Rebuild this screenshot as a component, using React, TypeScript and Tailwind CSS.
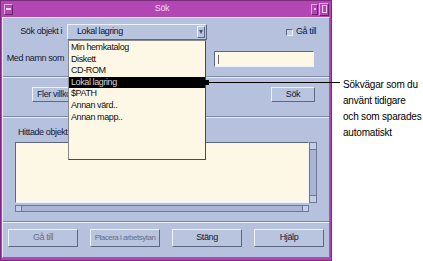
import React from "react";

const ui = { fontFamily: '"Liberation Sans", Arial, sans-serif' };

function Bevel({
  className = "",
  children,
  dim = false,
}: {
  className?: string;
  children?: React.ReactNode;
  dim?: boolean;
}) {
  return (
    <div
      className={`flex items-center justify-center whitespace-nowrap border border-t-[#eef2fa] border-l-[#eef2fa] border-b-[#5d6784] border-r-[#5d6784] bg-[#b9c4df] text-[9px] tracking-[-0.4px] ${
        dim ? "text-[#67708c]" : "text-[#14183a]"
      } ${className}`}
    >
      {children}
    </div>
  );
}

function Separator({ className = "" }: { className?: string }) {
  return (
    <div className={`flex flex-col ${className}`}>
      <div className="h-px bg-[#7c87a5]" />
      <div className="h-px bg-[#e8eef8]" />
    </div>
  );
}

const items = [
  { label: "Min hemkatalog" },
  { label: "Diskett" },
  { label: "CD-ROM" },
  { label: "Lokal lagring", active: true },
  { label: "$PATH" },
  { label: "Annan värd.." },
  { label: "Annan mapp.." },
];

export default function App() {
  return (
    <div className="relative flex w-[423px] h-[261px] bg-white overflow-hidden" style={ui}>
      {/* window frame */}
      <div className="flex flex-col w-[332px] h-[261px] bg-[#b247b4] border border-[#7b2a7d] px-[1px] pb-[2px]">
        <div className="flex items-center h-[16px] shrink-0">
          <div className="flex items-center justify-center w-[9px] h-[11px] ml-[2px] border border-[#e7a4e8] border-r-[#6e1f70] border-b-[#6e1f70]">
            <div className="w-[5px] h-[2px] bg-[#f4d8f5]" />
          </div>
          <div className="flex-1 text-center text-[9px] text-[#f3d9f3] tracking-[-0.3px]">Sök</div>
          <div className="flex items-center justify-center w-[7px] h-[11px] border border-[#e7a4e8] border-r-[#6e1f70] border-b-[#6e1f70]">
            <div className="w-[2px] h-[2px] bg-[#f4d8f5]" />
          </div>
          <div className="flex items-center justify-center w-[10px] h-[13px] ml-[1px] mr-[1px] border border-[#e7a4e8] border-r-[#6e1f70] border-b-[#6e1f70]">
            <div className="w-[5px] h-[8px] border border-[#f0c8f0]" />
          </div>
        </div>

        {/* dialog body */}
        <div className="flex flex-col flex-1 bg-[#b6c2dd] border border-[#e3e9f5] border-r-[#6a7492] border-b-[#6a7492] text-[#14183a]">
          {/* row 1 */}
          <div className="flex items-center h-[16px] mt-[6px]">
            <div className="w-[59px] text-right text-[9px] tracking-[-0.4px]">Sök objekt i</div>
            <Bevel className="ml-[5px] w-[140px] h-[16px] !justify-start pl-[9px] pr-[1px] !text-[#101438]">
              <span className="flex-1">Lokal lagring</span>
              <div className="flex items-center justify-center w-[8px] h-[12px] border border-t-[#eef2fa] border-l-[#eef2fa] border-b-[#5d6784] border-r-[#5d6784]">
                <div className="w-0 h-0 border-l-[2px] border-r-[2px] border-t-[4px] border-l-transparent border-r-transparent border-t-[#4a5270]" />
              </div>
            </Bevel>
            <div className="ml-[79px] flex items-center gap-[3px] text-[9px] tracking-[-0.4px]">
              <div className="w-[7px] h-[7px] border border-[#5d6784] border-r-[#eef2fa] border-b-[#eef2fa] bg-[#c7d0e6]" />
              Gå till
            </div>
          </div>

          {/* row 2 */}
          <div className="flex items-center h-[16px] mt-[11px]">
            <div className="w-[61px] text-right text-[9px] tracking-[-0.4px]">Med namn som</div>
            <div className="ml-[150px] w-[100px] h-[16px] flex items-center bg-[#fdf8e6] border border-[#5d6784] border-r-[#eef2fa] border-b-[#eef2fa] pl-[3px]">
              <div className="w-px h-[9px] bg-[#6a6a6a]" />
            </div>
          </div>

          <Separator className="mt-[9px]" />

          {/* row 3 */}
          <div className="flex items-center h-[15px] mt-[9px]">
            <Bevel className="ml-[29px] w-[80px] h-[15px] !justify-start pl-[4px]">Fler villkor...</Bevel>
            <Bevel className="ml-[159px] w-[44px] h-[15px]">Sök</Bevel>
          </div>

          <Separator className="mt-[14px]" />

          <div className="mt-[9px] pl-[15px] text-[9px] tracking-[-0.4px] leading-[11px]">Hittade objekt:</div>

          {/* result list */}
          <div className="flex mt-[4px] ml-[12px]">
            <div className="w-[294px] h-[61px] bg-[#fdf8e6] border border-[#5d6784] border-r-[#eef2fa] border-b-[#eef2fa]" />
            <div className="flex flex-col w-[8px] h-[61px] bg-[#a9b5d2] border border-[#6e7896]">
              <div className="h-[7px] border-b border-[#6e7896] bg-[#c3cde5]" />
              <div className="flex-1" />
              <div className="h-[7px] border-t border-[#6e7896] bg-[#c3cde5]" />
            </div>
          </div>
          <div className="flex mt-[2px] ml-[12px] w-[294px] h-[7px] bg-[#a9b5d2] border border-[#6e7896]">
            <div className="w-[6px] border-r border-[#6e7896] bg-[#c3cde5]" />
            <div className="flex-1" />
            <div className="w-[6px] border-l border-[#6e7896] bg-[#c3cde5]" />
          </div>

          <Separator className="mt-[9px]" />

          {/* bottom buttons */}
          <div className="flex items-center gap-[12px] mt-[6px] ml-[5px]">
            <Bevel dim className="w-[70px] h-[18px]">Gå till</Bevel>
            <Bevel dim className="w-[70px] h-[18px] !text-[8px] !tracking-[-0.5px]">Placera i arbetsytan</Bevel>
            <Bevel className="w-[70px] h-[18px]">Stäng</Bevel>
            <Bevel className="w-[70px] h-[18px]">Hjälp</Bevel>
          </div>
        </div>
      </div>

      {/* open dropdown */}
      <div className="absolute left-[68px] top-[40px] w-[138px] h-[120px] flex flex-col bg-[#fdf8e6] border border-[#8a8a8a] border-r-[#4a4a4a] border-b-[#4a4a4a] pt-[1px]">
        {items.map((it) => (
          <div
            key={it.label}
            className={`h-[11.6px] leading-[11.6px] pl-[2px] text-[9px] tracking-[-0.4px] ${
              it.active ? "bg-black text-[#d8d8d8]" : "text-[#101010]"
            }`}
          >
            {it.label}
          </div>
        ))}
      </div>

      {/* callout */}
      <div className="absolute left-[204px] top-[80px] w-[5px] h-[5px] bg-black" />
      <div className="absolute left-[206px] top-[82px] w-[134px] h-px bg-black" />
      <div className="absolute left-[343px] top-[77px] whitespace-nowrap text-[10px] leading-[16px] text-black tracking-[-0.2px]">
        Sökvägar som du
        <br />
        använt tidigare
        <br />
        och som sparades
        <br />
        automatiskt
      </div>
    </div>
  );
}
